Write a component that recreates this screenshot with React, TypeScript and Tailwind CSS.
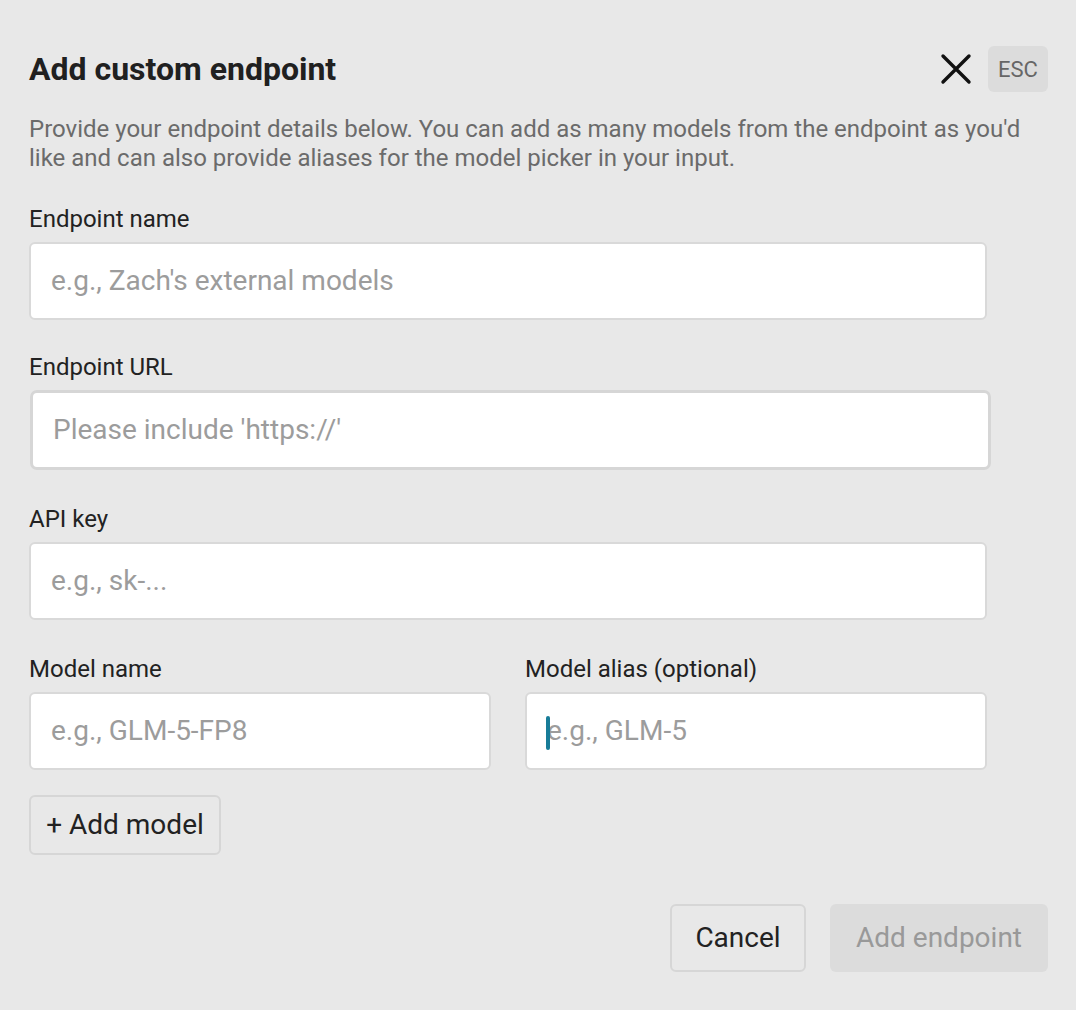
type FieldProps = {
  label: string
  placeholder: string
  className?: string
  emphasized?: boolean
  caret?: boolean
}

function Field({ label, placeholder, className = '', emphasized = false, caret = false }: FieldProps) {
  return (
    <div className={`flex flex-col ${className}`}>
      <label className="mb-[9px] text-[24px] leading-[28px] text-[#222]">{label}</label>
      <div
        className={
          emphasized
            ? 'relative ml-px flex h-[80px] w-[961px] items-center rounded-[7px] border-[3px] border-[#d6d6d6] bg-white pl-[20px]'
            : 'relative flex h-[78px] items-center rounded-[6px] border-2 border-[#d9d9d9] bg-white pl-[20px]'
        }
      >
        {caret && <span className="absolute left-[19px] top-[22px] h-[34px] w-[4px] rounded-full bg-[#177c98]" />}
        <span className="text-[28px] text-[#9c9c9c]">{placeholder}</span>
      </div>
    </div>
  )
}

export default function App() {
  return (
    <div className="min-h-[1010px] w-full bg-[#e8e8e8] px-[29px] pt-[46px] font-['Roboto',sans-serif]">
      <div className="w-[1019px]">
        <div className="flex h-[46px] items-center justify-between">
          <h1 className="text-[32px] font-bold leading-[36px] text-[#202020]">Add custom endpoint</h1>
          <div className="flex items-center gap-[16px]">
            <svg width="32" height="32" viewBox="0 0 32 32" className="text-[#111]">
              <path d="M3 3 L29 29 M29 3 L3 29" stroke="currentColor" strokeWidth="3.4" strokeLinecap="round" fill="none" />
            </svg>
            <span className="flex h-[46px] w-[60px] items-center justify-center rounded-[6px] bg-[#dcdcdc] text-[22px] text-[#666]">
              ESC
            </span>
          </div>
        </div>

        <p className="mt-[23px] text-[24px] leading-[29px] text-[#6b6b6b]">
          Provide your endpoint details below. You can add as many models from the endpoint as you'd
          <br />
          like and can also provide aliases for the model picker in your input.
        </p>

        <div className="mt-[32px] w-[958px]">
          <Field label="Endpoint name" placeholder="e.g., Zach's external models" />
          <Field label="Endpoint URL" placeholder="Please include 'https://'" className="mt-[33px]" emphasized />
          <Field label="API key" placeholder="e.g., sk-..." className="mt-[35px]" />
          <div className="mt-[35px] grid grid-cols-2 gap-[34px]">
            <Field label="Model name" placeholder="e.g., GLM-5-FP8" />
            <Field label="Model alias (optional)" placeholder="e.g., GLM-5" caret />
          </div>

          <button className="mt-[25px] h-[60px] w-[192px] rounded-[6px] border-2 border-[#d6d6d6] bg-[#e8e8e8] text-[28px] text-[#222]">
            + Add model
          </button>
        </div>

        <div className="mt-[49px] flex justify-end gap-[24px]">
          <button className="h-[68px] w-[136px] rounded-[6px] border-2 border-[#d6d6d6] bg-[#e8e8e8] text-[28px] text-[#222]">
            Cancel
          </button>
          <button className="h-[68px] w-[218px] rounded-[6px] bg-[#dcdcdc] text-[28px] text-[#999]">
            Add endpoint
          </button>
        </div>
      </div>
    </div>
  )
}
